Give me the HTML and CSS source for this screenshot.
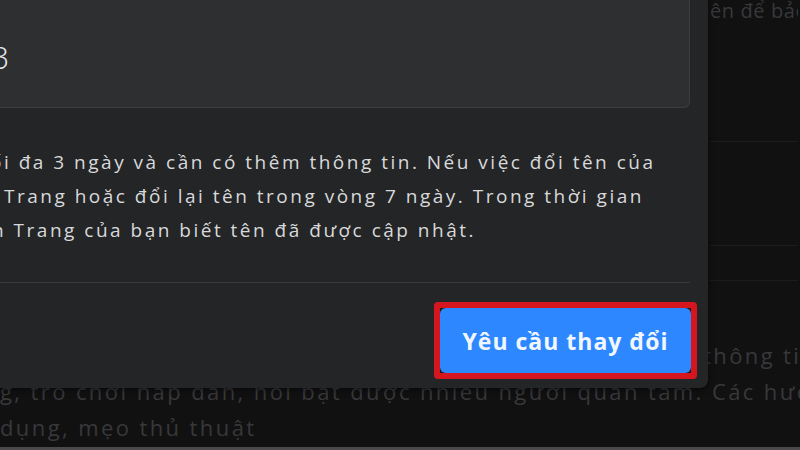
FILE: index.html
```html
<!DOCTYPE html>
<html lang="vi">
<head>
<meta charset="utf-8">
<title>Yêu cầu thay đổi</title>
<link rel="stylesheet" href="styles.css">
</head>
<body>
<div class="page">
  <div class="bg">
    <div class="side">
      <div class="side-text">ên để bảo vệ</div>
      <div class="side-rule rule-a"></div>
      <div class="side-rule rule-b"></div>
      <div class="side-rule rule-c"></div>
    </div>
    <div class="feed">
      <p class="feed-line feed-a">thông tin công nghệ</p>
      <p class="feed-line">g, trò chơi hấp dẫn, nổi bật được nhiều người quan tâm. Các hướng dẫn</p>
      <p class="feed-line">dụng, mẹo thủ thuật</p>
    </div>
    <div class="edge"></div>
  </div>

  <div class="modal">
    <div class="field"><span class="field-value">3</span></div>
    <div class="note">
      <div class="note-line l1">ối đa 3 ngày và cần có thêm thông tin. Nếu việc đổi tên của</div>
      <div class="note-line l2">Trang hoặc đổi lại tên trong vòng 7 ngày. Trong thời gian</div>
      <div class="note-line l3">n Trang của bạn biết tên đã được cập nhật.</div>
    </div>
    <div class="divider"></div>
    <div class="actions">
      <span class="highlight"><button class="primary">Yêu cầu thay đổi</button></span>
    </div>
  </div>
</div>
</body>
</html>
```

FILE: styles.css
```css
html, body {
  margin: 0;
  padding: 0;
}
body {
  background: #111112;
  font-family: "Open Sans", "Noto Sans", "DejaVu Sans", sans-serif;
  width: 800px;
  height: 450px;
  overflow: hidden;
}
.page {
  position: relative;
  width: 800px;
  height: 450px;
  overflow: hidden;
}

/* background page */
.bg {
  display: flex;
  flex-direction: column;
  height: 450px;
}
.side {
  margin-left: 710px;
  width: 88px;
  display: flex;
  flex-direction: column;
}
.side-text {
  margin-top: -7px;
  height: 36px;
  line-height: 36px;
  font-size: 20px;
  letter-spacing: 0.6px;
  color: #38383a;
  white-space: nowrap;
  overflow: hidden;
}
.side-rule {
  height: 1px;
  background: #1c1c1e;
}
.rule-a { margin-top: 112px; }
.rule-b { margin-top: 103px; }
.rule-c { margin-top: 34px; }
.feed {
  margin-top: 56px;
}
.feed-line {
  margin: 0;
  height: 36px;
  line-height: 36px;
  font-size: 22px;
  letter-spacing: 2.4px;
  color: #38383a;
  white-space: nowrap;
}
.feed-a {
  margin-left: 703px;
}
.edge {
  margin-top: 2px;
  height: 3px;
  background: #4a4a4c;
}

/* modal dialog */
.modal {
  position: absolute;
  top: 0;
  left: -30px;
  width: 738px;
  height: 388px;
  box-sizing: border-box;
  padding: 0 18px 0 16px;
  background: #242526;
  border-bottom-right-radius: 8px;
  box-shadow: 0 2px 6px rgba(0, 0, 0, 0.5);
  display: flex;
  flex-direction: column;
}
.field {
  height: 108px;
  box-sizing: border-box;
  background: #2e2f31;
  border: 1px solid #3c3d3f;
  border-top: none;
  border-radius: 0 0 6px 6px;
  display: flex;
  align-items: center;
  padding: 6px 0 0 4px;
  overflow: hidden;
}
.field-value {
  font-size: 32px;
  color: #e4e6eb;
  font-weight: 300;
}
.note {
  margin-top: 37px;
  color: #d8d9db;
  font-size: 19px;
  letter-spacing: 2.5px;
  line-height: 34px;
  white-space: nowrap;
}
.l1 { margin-left: 4px; }
.l2 { margin-left: 18px; }
.l3 { margin-left: 6px; }
.divider {
  margin-top: 35px;
  height: 1px;
  background: #393a3c;
}
.actions {
  margin-top: 19px;
  display: flex;
  justify-content: flex-end;
  margin-right: -7px;
}
.highlight {
  display: block;
  border: 6px solid #d6161e;
  border-radius: 4px;
  background: #1c1d1f;
}
.primary {
  display: block;
  width: 251px;
  height: 65px;
  border: none;
  border-radius: 6px;
  background: #2d88ff;
  color: #f2f7ff;
  font-family: "Open Sans", "Noto Sans", sans-serif;
  font-size: 23px;
  letter-spacing: 1px;
  font-weight: 700;
  padding: 0;
}
```
